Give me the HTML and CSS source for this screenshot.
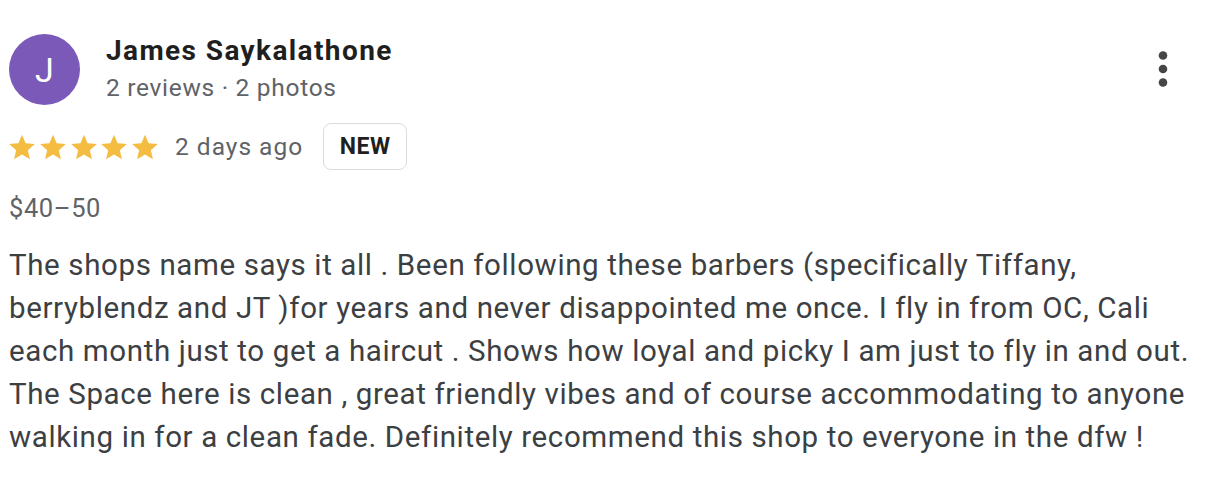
FILE: index.html
```html
<!DOCTYPE html>
<html lang="en">
<head>
<meta charset="utf-8">
<title>Review</title>
<link rel="stylesheet" href="styles.css">
</head>
<body>
<div class="review">
  <div class="head">
    <div class="avatar">J</div>
    <div class="who">
      <div class="name">James Saykalathone</div>
      <div class="meta">2 reviews · 2 photos</div>
    </div>
    <button class="more" aria-label="More">
      <svg width="12" height="40" viewBox="0 0 12 40"><circle cx="6" cy="6.5" r="4.3" fill="#444746"/><circle cx="6" cy="20" r="4.3" fill="#444746"/><circle cx="6" cy="33.5" r="4.3" fill="#444746"/></svg>
    </button>
  </div>
  <div class="rating">
    <div class="stars">
      <svg class="star" viewBox="0 0 24 24"><path d="M12 1.5l3.1 7.3 7.9.7-6 5.2 1.8 7.8L12 18.4l-6.8 4.1 1.8-7.8-6-5.2 7.9-.7z"/></svg>
      <svg class="star" viewBox="0 0 24 24"><path d="M12 1.5l3.1 7.3 7.9.7-6 5.2 1.8 7.8L12 18.4l-6.8 4.1 1.8-7.8-6-5.2 7.9-.7z"/></svg>
      <svg class="star" viewBox="0 0 24 24"><path d="M12 1.5l3.1 7.3 7.9.7-6 5.2 1.8 7.8L12 18.4l-6.8 4.1 1.8-7.8-6-5.2 7.9-.7z"/></svg>
      <svg class="star" viewBox="0 0 24 24"><path d="M12 1.5l3.1 7.3 7.9.7-6 5.2 1.8 7.8L12 18.4l-6.8 4.1 1.8-7.8-6-5.2 7.9-.7z"/></svg>
      <svg class="star" viewBox="0 0 24 24"><path d="M12 1.5l3.1 7.3 7.9.7-6 5.2 1.8 7.8L12 18.4l-6.8 4.1 1.8-7.8-6-5.2 7.9-.7z"/></svg>
    </div>
    <span class="when">2 days ago</span>
    <span class="badge">NEW</span>
  </div>
  <div class="price">$40–50</div>
  <p class="text">The shops name says it all . Been following these barbers (specifically Tiffany, berryblendz and JT )for years and never disappointed me once. I fly in from OC, Cali each month just to get a haircut . Shows how loyal and picky I am just to fly in and out. The Space here is clean , great friendly vibes and of course accommodating to anyone walking in for a clean fade. Definitely recommend this shop to everyone in the dfw !</p>
</div>
</body>
</html>
```

FILE: styles.css
```css
html, body {
  margin: 0;
  padding: 0;
  background: #ffffff;
}
body {
  font-family: Roboto, "Noto Sans", Arial, sans-serif;
}
.review {
  padding: 34px 0 0 9px;
  width: 1199px;
  box-sizing: border-box;
}
.head {
  display: flex;
  align-items: flex-start;
}
.avatar {
  width: 71px;
  height: 71px;
  border-radius: 50%;
  background: #7b59b9;
  color: #fff;
  font-size: 34px;
  display: flex;
  align-items: center;
  justify-content: center;
  flex-shrink: 0;
}
.who {
  margin-left: 26px;
  flex: 1;
}
.name {
  font-size: 28px;
  font-weight: 700;
  color: #1f1f1f;
  line-height: 34px;
  letter-spacing: 1.4px;
}
.meta {
  font-size: 24.5px;
  color: #5f6368;
  line-height: 36px;
  margin-top: 2px;
  letter-spacing: 0.7px;
}
.more {
  border: 0;
  background: none;
  padding: 0;
  margin-top: 15px;
  margin-right: 30px;
}
.more svg { display: block; }
.rating {
  display: flex;
  align-items: center;
  margin-top: 17px;
}
.stars {
  display: flex;
  gap: 2.75px;
  margin-left: -1px;
}
.star {
  width: 28px;
  height: 28px;
  fill: #f4bd41;
}
.when {
  font-size: 24.5px;
  color: #5f6368;
  margin-left: 16px;
  letter-spacing: 1px;
}
.badge {
  margin-left: 20px;
  border: 1.5px solid #dadce0;
  border-radius: 8px;
  width: 84px;
  height: 47px;
  box-sizing: border-box;
  display: flex;
  align-items: center;
  justify-content: center;
  font-size: 23px;
  font-weight: 700;
  color: #1f1f1f;
  letter-spacing: 0.5px;
}
.price {
  margin-top: 22px;
  font-size: 25.5px;
  color: #5f6368;
  line-height: 32px;
  letter-spacing: 0.6px;
}
.text {
  margin: 20px 0 0 0;
  font-size: 29.5px;
  line-height: 43px;
  color: #3c4043;
  letter-spacing: 0.62px;
}
```
